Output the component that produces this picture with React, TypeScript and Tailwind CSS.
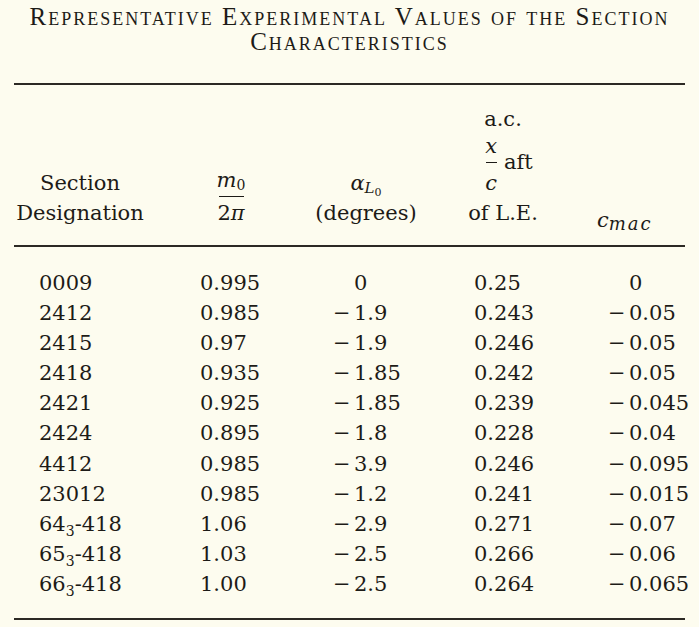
const ROWS: [string, string, string, string, string][] = [
  ['0009', '0.995', '0', '0.25', '0'],
  ['2412', '0.985', '-1.9', '0.243', '-0.05'],
  ['2415', '0.97', '-1.9', '0.246', '-0.05'],
  ['2418', '0.935', '-1.85', '0.242', '-0.05'],
  ['2421', '0.925', '-1.85', '0.239', '-0.045'],
  ['2424', '0.895', '-1.8', '0.228', '-0.04'],
  ['4412', '0.985', '-3.9', '0.246', '-0.095'],
  ['23012', '0.985', '-1.2', '0.241', '-0.015'],
  ['64₃-418', '1.06', '-2.9', '0.271', '-0.07'],
  ['65₃-418', '1.03', '-2.5', '0.266', '-0.06'],
  ['66₃-418', '1.00', '-2.5', '0.264', '-0.065'],
]

const GRID = 'grid grid-cols-[132px_170px_100px_174px_1fr]'

function Designation({ value }: { value: string }) {
  const idx = value.indexOf('₃')
  if (idx < 0) return <>{value}</>
  return (
    <>
      {value.slice(0, idx)}
      <span className="relative top-[5px] text-[14px] leading-none">3</span>
      {value.slice(idx + 1)}
    </>
  )
}

function Signed({ value }: { value: string }) {
  const neg = value.startsWith('-')
  return (
    <>
      <span className="inline-block w-[21px]">{neg ? '\u2212' : ''}</span>
      {neg ? value.slice(1) : value}
    </>
  )
}

export default function App() {
  return (
    <div className="min-h-[627px] w-[699px] bg-[#fdfcef] font-['DejaVu_Serif',serif] text-[#1d1b17]">
      <div className="flex flex-col items-center pt-[4px] font-['Liberation_Serif',serif] text-[25px] leading-[25px] tracking-[2px] [font-variant:small-caps]">
        <span>Representative Experimental Values of the Section</span>
        <span>Characteristics</span>
      </div>

      <div className="mx-[14px] mt-[29px] border-t-2 border-[#2c2924]" />

      {/* header */}
      <div className={`${GRID} mx-[14px] h-[160px] items-end pb-[17px] text-[21px] leading-[30px]`}>
        <div className="flex flex-col items-center">
          <span>Section</span>
          <span>Designation</span>
        </div>
        <div className="flex flex-col items-center">
          <span className="italic">
            m<span className="relative top-[3px] text-[14px] leading-none not-italic">0</span>
          </span>
          <span className="my-[1px] h-[1px] w-[25px] bg-[#1d1b17]" />
          <span>
            2<span className="italic">π</span>
          </span>
        </div>
        <div className="flex flex-col items-center">
          <span className="italic">
            α
            <span className="relative top-[3px] text-[15px] leading-none">L</span>
            <span className="relative top-[6px] text-[11px] leading-none not-italic">0</span>
          </span>
          <span>(degrees)</span>
        </div>
        <div className="flex flex-col items-center">
          <span className="h-[30px]">a.c.</span>
          <div className="flex items-center gap-[7px] pl-[12px]">
            <div className="flex flex-col items-center">
              <span className="h-[24px] leading-[24px] italic">x</span>
              <span className="mt-[4px] h-[1px] w-[11px] bg-[#1d1b17]" />
              <span className="mt-[8px] h-[24px] leading-[24px] italic">c</span>
            </div>
            <span className="-mt-[6px]">aft</span>
          </div>
          <span className="mt-[3px] h-[30px]">of L.E.</span>
        </div>
        <div className="relative top-[7px] whitespace-nowrap pl-[7px] italic">
          c<span className="relative top-[3px] text-[18px] leading-none tracking-[2px]">mac</span>
        </div>
      </div>

      <div className="mx-[14px] border-t-2 border-[#2c2924]" />

      {/* rows */}
      <div className="mx-[14px] pt-[21px] pb-[19px] text-[21px] leading-[30.1px]">
        {ROWS.map((r) => (
          <div key={r[0]} className={`${GRID} h-[30.1px] whitespace-nowrap`}>
            <div className="pl-[25px]">
              <Designation value={r[0]} />
            </div>
            <div className="pl-[54px]">{r[1]}</div>
            <div className="pl-[17px]">
              <Signed value={r[2]} />
            </div>
            <div className="pl-[58px]">{r[3]}</div>
            <div className="pl-[18px]">
              <Signed value={r[4]} />
            </div>
          </div>
        ))}
      </div>

      <div className="mx-[14px] border-t-2 border-[#2c2924]" />
    </div>
  )
}
